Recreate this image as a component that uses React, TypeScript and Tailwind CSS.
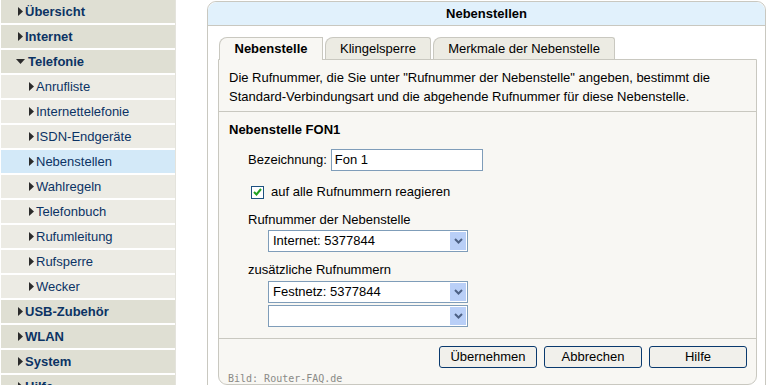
const font = { fontFamily: '"Liberation Sans", Arial, sans-serif' };

type NavItem = { label: string; level: 0 | 1; open?: boolean; active?: boolean };

const nav: NavItem[] = [
  { label: "Übersicht", level: 0 },
  { label: "Internet", level: 0 },
  { label: "Telefonie", level: 0, open: true },
  { label: "Anrufliste", level: 1 },
  { label: "Internettelefonie", level: 1 },
  { label: "ISDN-Endgeräte", level: 1 },
  { label: "Nebenstellen", level: 1, active: true },
  { label: "Wahlregeln", level: 1 },
  { label: "Telefonbuch", level: 1 },
  { label: "Rufumleitung", level: 1 },
  { label: "Rufsperre", level: 1 },
  { label: "Wecker", level: 1 },
  { label: "USB-Zubehör", level: 0 },
  { label: "WLAN", level: 0 },
  { label: "System", level: 0 },
  { label: "Hilfe", level: 0 },
];

const Arrow = ({ down }: { down?: boolean }) =>
  down ? (
    <svg width="9" height="5" viewBox="0 0 9 5" className="mr-[3px]">
      <path d="M0 0h9L4.5 5z" fill="#2b2b2b" />
    </svg>
  ) : (
    <svg width="5" height="9" viewBox="0 0 5 9" className="mr-[2px]">
      <path d="M0 0l5 4.5L0 9z" fill="#2b2b2b" />
    </svg>
  );

const SelectBox = ({ value }: { value: string }) => (
  <div className="flex h-[22px] w-[200px] items-center border border-[#7f9db9] bg-white">
    <span className="flex-1 pl-[4px] text-[13px] leading-[16px] text-black">{value}</span>
    <div className="mr-px flex h-[18px] w-[16px] items-center justify-center bg-[#b9cff7]">
      <svg width="9" height="6" viewBox="0 0 9 6">
        <path d="M1 1l3.5 3.5L8 1" stroke="#4d6185" strokeWidth="2" fill="none" />
      </svg>
    </div>
  </div>
);

const Btn = ({ label }: { label: string }) => (
  <button className="h-[22px] w-[98px] rounded-[3px] border border-[#0a3a6e] bg-[#f1f0eb] text-[13px] leading-[16px] text-black">
    {label}
  </button>
);

export default function App() {
  return (
    <div className="flex h-[385px] w-[768px] overflow-hidden bg-white" style={font}>
      <div className="flex w-[176px] flex-col gap-[2px] border-r border-[#e4e3dc] pl-px">
        {nav.map((n) => (
          <div
            key={n.label}
            className={`flex h-[23px] shrink-0 items-center ${
              n.active ? "bg-[#d3e9f8]" : n.level === 0 ? "bg-[#dfdfd3]" : "bg-[#ecebe4]"
            } ${n.level === 0 ? (n.open ? "pl-[15px]" : "pl-[17px]") : "pl-[28px]"}`}
          >
            <Arrow down={n.open} />
            <span
              className={`text-[13px] text-[#0b3364] ${n.level === 0 ? "font-bold" : ""}`}
            >
              {n.label}
            </span>
          </div>
        ))}
      </div>

      <div className="ml-[31px] mt-px flex h-[400px] w-[559px] flex-col rounded-t-[9px] rounded-b-[9px] border border-[#c9c8c0]">
        <div className="flex h-[24px] items-center justify-center rounded-t-[9px] border-b border-[#c9c8c0] bg-[#e1f1fc] text-[13px] font-bold text-black">
          Nebenstellen
        </div>

        <div className="flex-1 px-[10px] pt-[11px]">
          <div className="flex h-[22px] items-end gap-[2px] pl-px">
            <div className="relative z-10 -mb-px flex h-[23px] w-[104px] items-center justify-center rounded-tl-[8px] border border-b-0 border-[#c9c8c0] bg-[#f8f7f3] text-[13px] font-bold text-black">
              Nebenstelle
            </div>
            <div className="flex h-[22px] w-[106px] items-center justify-center rounded-tl-[8px] rounded-tr-[3px] border border-b-0 border-[#c9c8c0] bg-[#ecebe3] text-[13px] text-black">
              Klingelsperre
            </div>
            <div className="flex h-[22px] w-[182px] items-center justify-center rounded-tl-[8px] rounded-tr-[3px] border border-b-0 border-[#c9c8c0] bg-[#ecebe3] text-[13px] text-black">
              Merkmale der Nebenstelle
            </div>
          </div>

          <div className="h-[326px] w-[539px] rounded-b-[9px] border border-[#c9c8c0] bg-[#f8f7f3] text-[13px] leading-[16px] text-black">
            <div className="h-[52px] border-b border-[#c9c8c0] px-[10px] pt-[8px] leading-[19px]">
              Die Rufnummer, die Sie unter "Rufnummer der Nebenstelle" angeben, bestimmt die
              <br />
              Standard-Verbindungsart und die abgehende Rufnummer für diese Nebenstelle.
            </div>

            <div className="h-[227px] border-b border-[#c9c8c0] px-[10px] pt-[10px]">
              <div className="font-bold">Nebenstelle FON1</div>

              <div className="mt-[11px] flex h-[22px] items-center pl-[19px]">
                <span className="mr-[4px]">Bezeichnung:</span>
                <div className="flex h-[22px] w-[152px] items-center border border-[#7f9db9] bg-white pl-[3px]">
                  Fon 1
                </div>
              </div>

              <div className="mt-[13px] flex h-[16px] items-center pl-[22px]">
                <div className="mr-[7px] flex h-[13px] w-[13px] items-center justify-center border border-[#1c5180] bg-white">
                  <svg width="9" height="8" viewBox="0 0 9 8">
                    <path d="M1 4l2.5 2.5L8 1" stroke="#21a121" strokeWidth="2" fill="none" />
                  </svg>
                </div>
                <span>auf alle Rufnummern reagieren</span>
              </div>

              <div className="mt-[12px] pl-[19px]">Rufnummer der Nebenstelle</div>
              <div className="mt-[2px] pl-[39px]">
                <SelectBox value="Internet: 5377844" />
              </div>

              <div className="mt-[10px] pl-[19px]">zusätzliche Rufnummern</div>
              <div className="mt-[3px] flex flex-col gap-[2px] pl-[39px]">
                <SelectBox value="Festnetz: 5377844" />
                <SelectBox value="" />
              </div>
            </div>

            <div className="flex justify-end gap-[7px] pr-[9px] pt-[7px]">
              <Btn label="Übernehmen" />
              <Btn label="Abbrechen" />
              <Btn label="Hilfe" />
            </div>

            <div
              className="pl-[9px] pt-[4px] text-[10px] leading-[13px] text-[#8a8a86]"
              style={{ fontFamily: '"DejaVu Sans Mono", monospace' }}
            >
              Bild: Router-FAQ.de
            </div>
          </div>
        </div>
      </div>
    </div>
  );
}
